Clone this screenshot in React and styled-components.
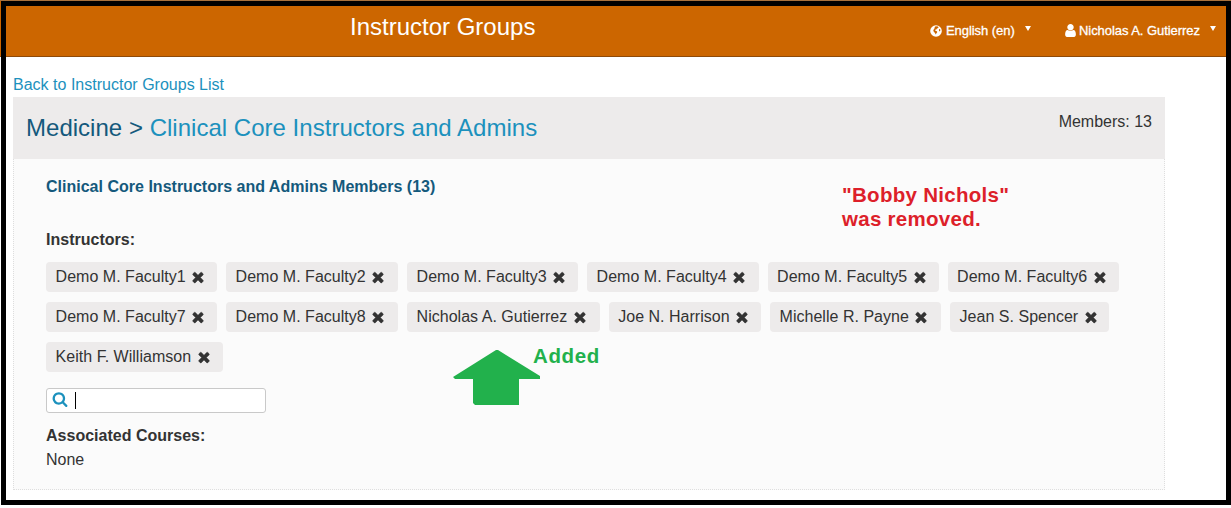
import React from "react";
import styled, { createGlobalStyle } from "styled-components";

const Global = createGlobalStyle`
  * { box-sizing: border-box; }
  body { margin: 0; background: #fff; color: #333; font: 16px/24px "Liberation Sans", Arial, sans-serif; }
`;
const Page = styled.div`
  height: 505px;
  padding: 1px 0 0 1px;
  background: linear-gradient(#a9713c 0 1px, #cc6600 1px 56px, #8f4a08 56px 57px, #fff 57px);
`;
const Frame = styled.div`
  position: relative;
  width: 1230px;
  height: 504px;
  border: 5px solid #000;
  background: #fff;
`;
const Header = styled.header`
  display: flex;
  align-items: flex-start;
  height: 51px;
  background: #cc6600;
  border-bottom: 1px solid #8f4a08;
  color: #fff;
`;
const Title = styled.h1`
  margin: 6px 0 0 344px;
  width: 580px;
  font-size: 24px;
  line-height: 30px;
  font-weight: 400;
`;
const MenuButton = styled.div`
  display: flex;
  align-items: center;
  height: 20px;
  margin-top: 15px;
  margin-right: ${(p) => p.$after || 0}px;
  font-size: 13px;
  line-height: 20px;
  white-space: nowrap;
  -webkit-text-stroke: 0.3px #fff;
  > svg { margin-bottom: 1px; }
`;
const MenuLabel = styled.span`
  width: ${(p) => p.$w}px;
  margin-left: ${(p) => p.$gap}px;
  letter-spacing: -0.06px;
`;
const Caret = styled.i`
  margin: 0 0 5px 10px;
  border: 2.5px solid transparent;
  border-width: 5px 3px 0;
  border-top-color: #fff;
`;
const Icon = styled.svg`
  display: block;
  flex: none;
  fill: currentColor;
  width: ${(p) => p.$size}px;
  height: ${(p) => p.$size}px;
`;
const Main = styled.main`
  padding: 16px 61px 0 7px;
`;
const BackLink = styled.a`
  display: block;
  color: #1c91bd;
  letter-spacing: 0.01px;
`;
const Panel = styled.section`
  height: 393px;
  width: 1152px;
  background: #fbfbfb;
  border: 1px dotted #dedede;
  border-top: 0;
`;
const PanelHead = styled.div`
  display: flex;
  justify-content: space-between;
  height: 62px;
  margin: 0 -1px;
  padding: 13px 13px 0;
  background: #edebeb;
`;
const Crumb = styled.h2`
  margin: 3px 0 0;
  font-size: 24px;
  line-height: 30px;
  font-weight: 400;
  letter-spacing: 0.02px;
  color: #14597c;
  span { color: #1c91bd; }
`;
const Body = styled.div`
  padding: 16px 32px 0;
`;
const Heading = styled.h3`
  margin: 0;
  font-size: 16px;
  line-height: 24px;
  font-weight: 700;
  letter-spacing: 0.01px;
  color: ${(p) => p.$color || "#333"};
`;
const Chips = styled.div`
  display: flex;
  flex-wrap: wrap;
  gap: 10px 9px;
  margin-top: 10px;
`;
const Section = styled.div`
  margin-top: ${(p) => p.$top}px;
`;
const Chip = styled.div`
  display: flex;
  align-items: center;
  width: ${(p) => p.$w}px;
  height: 30px;
  padding-left: 9.6px;
  border-radius: 4px;
  background: #edebeb;
  white-space: nowrap;
  letter-spacing: 0.02px;
  svg { margin: 0 0 1px 4.4px; stroke: currentColor; stroke-width: 50; }
`;
const Search = styled.div`
  display: flex;
  align-items: center;
  width: 220px;
  height: 25px;
  margin-top: 16px;
  padding-left: 5px;
  border: 1px solid #c9c9c9;
  border-radius: 3px;
  background: #fff;
  color: #1c91bd;
  svg { margin-bottom: 3px; }
`;
const TextCursor = styled.i`
  width: 1px;
  height: 17px;
  margin-left: 7px;
  background: #000;
`;
const Note = styled.div`
  position: absolute;
  left: ${(p) => p.$x}px;
  top: ${(p) => p.$y}px;
  color: ${(p) => p.$color};
  font-weight: 700;
  font-size: 20.5px;
  line-height: 24px;
  letter-spacing: ${(p) => p.$track}px;
  white-space: nowrap;
`;
const Arrow = styled.svg`
  position: absolute;
  left: 446px;
  top: 343px;
`;

const times = "M1490 1322q0 40-28 68l-136 136q-28 28-68 28t-68-28l-294-294-294 294q-28 28-68 28t-68-28l-136-136q-28-28-28-68t28-68l294-294-294-294q-28-28-28-68t28-68l136-136q28-28 68-28t68 28l294 294 294-294q28-28 68-28t68 28l136 136q28 28 28 68t-28 68l-294 294 294 294q28 28 28 68z";
const user = "M1536 1399q0 109-62.5 187t-150.5 78h-854q-88 0-150.5-78t-62.5-187q0-85 8.5-160.5t31.5-152 58.5-131 94-89 134.5-34.5q131 128 313 128t313-128q76 0 134.5 34.5t94 89 58.5 131 31.5 152 8.5 160.5zm-256-887q0 159-112.5 271.5t-271.5 112.5-271.5-112.5-112.5-271.5 112.5-271.5 271.5-112.5 271.5 112.5 112.5 271.5z";
const search = "M1216 832q0-185-131.5-316.5t-316.5-131.5-316.5 131.5-131.5 316.5 131.5 316.5 316.5 131.5 316.5-131.5 131.5-316.5zm512 832q0 52-38 90t-90 38q-54 0-90-38l-343-342q-179 124-399 124-143 0-273.5-55.5t-225-150-150-225-55.5-273.5 55.5-273.5 150-225 225-150 273.5-55.5 273.5 55.5 225 150 150 225 55.5 273.5q0 220-124 399l343 343q37 37 37 90z";

const people = [
  ["Demo M. Faculty1", 171], ["Demo M. Faculty2", 172], ["Demo M. Faculty3", 171],
  ["Demo M. Faculty4", 171.5], ["Demo M. Faculty5", 171], ["Demo M. Faculty6", 171],
  ["Demo M. Faculty7", 171], ["Demo M. Faculty8", 172], ["Nicholas A. Gutierrez", 192.6],
  ["Joe N. Harrison", 152.4], ["Michelle R. Payne", 171], ["Jean S. Spencer", 159],
  ["Keith F. Williamson", 177],
];

export default function App() {
  return (
    <Page>
      <Global />
      <Frame>
        <Header>
          <Title>Instructor Groups</Title>
          <MenuButton $after={32}>
            <Icon $size={12} viewBox="0 0 12 12">
              <circle cx="6" cy="6" r="5.8" />
              <path fill="#cc6600" d="M5 1.6l2.2-.4 1.3.8-.3 1-1.2.4-.7 1.1-1.2.3.3 1 1.4.4.5.9-1 1.5-.6.9-.7-1.5-1.4-1.4-.3-1.5.9-1.2zM9 4.3l1-.3.4 1.3-.6 1.1-.8-.7z" />
            </Icon>
            <MenuLabel $gap={4} $w={69}>English (en)</MenuLabel>
            <Caret />
          </MenuButton>
          <MenuButton>
            <Icon $size={15} viewBox="0 0 1792 1792"><path d={user} /></Icon>
            <MenuLabel $gap={1} $w={121}>Nicholas A. Gutierrez</MenuLabel>
            <Caret />
          </MenuButton>
        </Header>
        <Main>
          <BackLink>Back to Instructor Groups List</BackLink>
          <Panel>
            <PanelHead>
              <Crumb>Medicine &gt; <span>Clinical Core Instructors and Admins</span></Crumb>
              <span>Members: 13</span>
            </PanelHead>
            <Body>
              <Heading $color="#14597c">Clinical Core Instructors and Admins Members (13)</Heading>
              <Section $top={29}>
                <Heading>Instructors:</Heading>
                <Chips>
                  {people.map(([name, w]) => (
                    <Chip key={name} $w={w}>
                      {name}
                      <Icon $size={16} viewBox="0 0 1792 1792"><path d={times} /></Icon>
                    </Chip>
                  ))}
                </Chips>
                <Search>
                  <Icon $size={16} viewBox="0 0 1792 1792"><path d={search} /></Icon>
                  <TextCursor />
                </Search>
              </Section>
              <Section $top={11}>
                <Heading>Associated Courses:</Heading>
                <div>None</div>
              </Section>
            </Body>
          </Panel>
        </Main>
        <Note $x={836} $y={177} $track={0.28} $color="#dd1f2a">"Bobby Nichols"<br />was removed.</Note>
        <Note $x={527} $y={338} $track={0.6} $color="#22b14c">Added</Note>
        <Arrow width="90" height="58" viewBox="0 0 90 58">
          <path fill="#22b14c" d="M44 1h2L88 27v3H67v26H23L21 54V30H3L1 28z" />
        </Arrow>
      </Frame>
    </Page>
  );
}
